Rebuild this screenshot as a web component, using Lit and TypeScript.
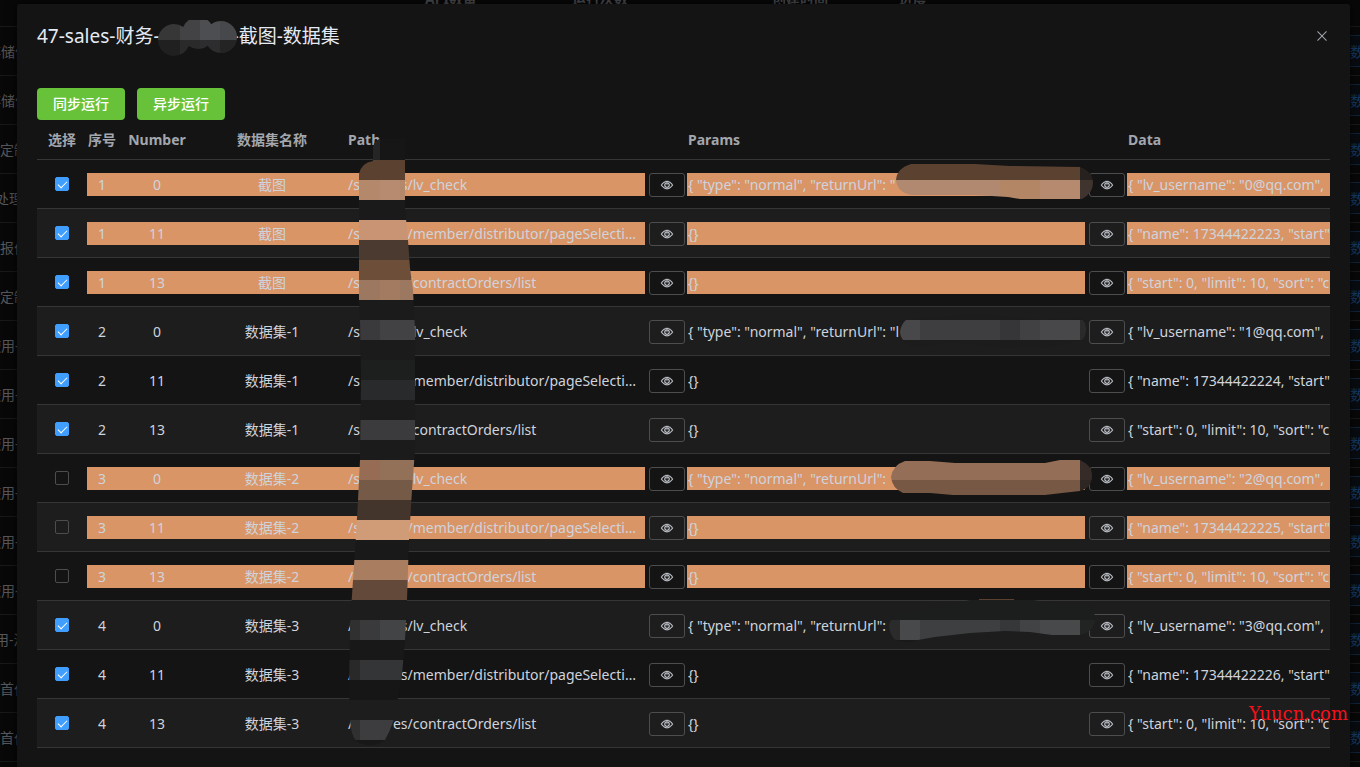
import { LitElement, html, svg, css } from "lit";
import { customElement, state } from "lit/decorators.js";
import { classMap } from "lit/directives/class-map.js";

interface Row {
  checked: boolean;
  marked: boolean;
  group: number;
  number: number;
  name: string;
  path: string;
  params: string;
  data: string;
}

const groups = [
  { id: 1, name: "截图", checked: true, marked: true, url: '"' },
  { id: 2, name: "数据集-1", checked: true, marked: false, url: '"l' },
  { id: 3, name: "数据集-2", checked: false, marked: true, url: "" },
  { id: 4, name: "数据集-3", checked: true, marked: false, url: "" },
];

const initialRows: Row[] = groups.flatMap((g, i) => {
  const base = { checked: g.checked, marked: g.marked, group: g.id, name: g.name };
  return [
    { ...base, number: 0, path: "es/lv_check", params: `{ "type": "normal", "returnUrl": ${g.url}`, data: `{ "lv_username": "${i}@qq.com",` },
    { ...base, number: 11, path: "es/member/distributor/pageSelectionList", params: "{}", data: `{ "name": ${17344422223 + i}, "start"` },
    { ...base, number: 13, path: "es/contractOrders/list", params: "{}", data: '{ "start": 0, "limit": 10, "sort": "c' },
  ];
});

const pageRows = [
  { text: "存储值", shift: "wide" },
  { text: "存储值", shift: "wide" },
  { text: "定制", shift: "" },
  { text: "处理", shift: "narrow" },
  { text: "报价", shift: "" },
  { text: "定制", shift: "" },
  { text: "使用-", shift: "wide" },
  { text: "使用-", shift: "wide" },
  { text: "使用-", shift: "wide" },
  { text: "使用-", shift: "wide" },
  { text: "使用-", shift: "wide" },
  { text: "使用-", shift: "wide" },
  { text: "用-满", shift: "narrow" },
  { text: "首付", shift: "" },
  { text: "首付", shift: "" },
];

/* Mosaic tiles: x, y, width, height, fill */
type Tile = [number, number, number, number, string];

const titleTiles: Tile[] = [
  [158, 20, 22, 20, "#373737"], [180, 20, 20, 20, "#434345"], [200, 20, 20, 20, "#4d4e52"], [220, 20, 18, 20, "#47484b"],
  [158, 40, 22, 18, "#202020"], [180, 40, 20, 18, "#2a2a2b"], [200, 40, 38, 18, "#2d2d2f"], [220, 40, 18, 18, "#242424"],
];

const pathTiles: Tile[] = [
  [345, 138, 80, 22, "#161616"], [373, 138, 7, 22, "#252525"],
  [345, 160, 80, 20, "#5b4130"], [345, 180, 80, 20, "#b3886b"], [380, 180, 20, 20, "#b78b6f"],
  [345, 200, 80, 20, "#1a1a1a"], [345, 220, 80, 20, "#c89473"], [345, 240, 80, 20, "#4b3a2f"],
  [345, 260, 80, 20, "#6d4e38"], [345, 280, 80, 20, "#9d7860"], [380, 280, 20, 20, "#a37b61"],
  [345, 300, 80, 20, "#1b1b1b"], [345, 320, 35, 20, "#3a3a3c"], [380, 320, 45, 20, "#424244"],
  [345, 340, 80, 20, "#1b1b1b"], [345, 360, 80, 20, "#1d1e1e"], [345, 380, 80, 20, "#292a2c"],
  [345, 400, 80, 20, "#1b1b1b"], [345, 420, 80, 20, "#3b3b3d"], [345, 440, 80, 20, "#1b1b1b"],
  [345, 460, 35, 20, "#966d54"], [380, 460, 45, 20, "#937158"], [345, 480, 80, 20, "#765a48"],
  [345, 500, 80, 20, "#43342c"], [345, 520, 80, 20, "#d09c78"], [345, 540, 80, 20, "#191919"],
  [345, 560, 80, 20, "#a97d60"], [345, 580, 80, 20, "#634939"], [345, 600, 80, 20, "#1d1d1d"],
  [345, 620, 15, 20, "#303031"], [360, 620, 20, 20, "#3a3a3c"], [380, 620, 45, 20, "#434446"],
  [345, 640, 80, 20, "#181818"], [345, 660, 15, 20, "#29292a"], [360, 660, 65, 20, "#343537"],
  [345, 680, 80, 20, "#161616"], [345, 700, 80, 20, "#1d1d1d"],
  [345, 720, 15, 20, "#303030"], [360, 720, 65, 20, "#3d3d3f"], [345, 740, 80, 10, "#181818"],
];

const paramTiles: Tile[] = [
  [890, 160, 190, 20, "#5b4130"], [890, 180, 110, 20, "#b18870"], [1000, 180, 40, 20, "#b38766"],
  [1040, 180, 40, 20, "#b58a6f"], [1080, 160, 16, 20, "#26211e"], [1080, 180, 16, 20, "#40342e"],
  [890, 314, 200, 6, "#1c1c1c"], [890, 340, 200, 9, "#1c1c1c"],
  [890, 320, 30, 20, "#48484a"], [920, 320, 80, 20, "#3e3e40"], [1000, 320, 20, 20, "#363638"],
  [1020, 320, 20, 20, "#414143"], [1040, 320, 40, 20, "#48484a"], [1080, 320, 10, 20, "#2a2a2a"],
  [888, 458, 192, 22, "#946e56"], [888, 480, 192, 20, "#775844"],
  [1080, 458, 16, 22, "#362b26"], [1080, 480, 16, 20, "#2d2623"],
  [886, 598, 212, 22, "#1c1d1d"], [886, 620, 14, 20, "#2b2b2b"], [900, 620, 20, 20, "#48494b"],
  [920, 620, 80, 20, "#3e3f40"], [1000, 620, 20, 20, "#363738"], [1020, 620, 20, 20, "#424344"],
  [1040, 620, 40, 20, "#48494a"], [1080, 620, 18, 20, "#222424"], [886, 640, 60, 6, "#191919"],
];

const drawTiles = (tiles: Tile[]) =>
  tiles.map(([x, y, w, h, fill]) => svg`<rect x=${x} y=${y} width=${w} height=${h} fill=${fill}></rect>`);

const eyeIcon = html`<svg class="eye" viewBox="0 0 1024 1024" aria-hidden="true">
  <path fill="currentColor" stroke="currentColor" stroke-width="24" d="M512 160c320 0 512 352 512 352S832 864 512 864 0 512 0 512s192-352 512-352zm0 64c-225.28 0-384.128 208.064-436.8 288 52.608 79.872 211.456 288 436.8 288 225.28 0 384.128-208.064 436.8-288-52.608-79.872-211.456-288-436.8-288zm0 64a224 224 0 1 1 0 448 224 224 0 0 1 0-448zm0 64a160.192 160.192 0 0 0-160 160c0 88.192 71.744 160 160 160s160-71.808 160-160-71.744-160-160-160z"></path>
  <path fill="currentColor" d="M480 340h64v190h-64z"></path>
</svg>`;

@customElement("app-root")
export class AppRoot extends LitElement {
  @state() private rows: Row[] = initialRows;

  static styles = css`
    :host {
      display: block;
      position: relative;
      min-height: 100vh;
      overflow: hidden;
      background: #080808;
      color: #cfd3dc;
      font-family: "Noto Sans", "Noto Sans CJK SC", sans-serif;
      font-size: 14px;
    }
    * { box-sizing: border-box; }
    .page {
      position: absolute;
      inset: 0;
      overflow: hidden;
      color: #56585c;
    }
    .page-head {
      display: grid;
      grid-template-columns: 425px 147px 200px 127px 1fr;
      height: 27px;
      border-bottom: 1px solid #191919;
      font-weight: 700;
      line-height: 20px;
    }
    .page-head span { margin-top: -11px; color: #4b4c50; }
    .page-row {
      display: flex;
      align-items: center;
      justify-content: space-between;
      height: 49px;
      border-bottom: 1px solid #191919;
      white-space: nowrap;
    }
    .wide { margin-left: -13px; }
    .narrow { margin-left: -5px; }
    .page-link {
      display: flex;
      align-items: center;
      width: 24px;
      height: 32px;
      padding: 0 0 0 14px;
      border: solid #10243a;
      border-width: 1px 0;
      background: #080c11;
      color: #143c66;
      font: inherit;
    }
    .dialog {
      position: relative;
      margin: 4px 10px 0 17px;
      min-height: calc(100vh - 4px);
      padding: 20px;
      border-radius: 2px;
      background: #141414;
      box-shadow: 0 0 12px rgba(0, 0, 0, 0.7);
    }
    .dialog-head {
      display: flex;
      align-items: center;
      justify-content: space-between;
      height: 24px;
    }
    .title {
      margin: 0;
      color: #e5eaf3;
      font-size: 19px;
      font-weight: 400;
      line-height: 24px;
      white-space: nowrap;
    }
    .title-gap { display: inline-block; width: 73px; }
    .close {
      display: flex;
      padding: 0;
      border: 0;
      background: none;
      color: #a3a6ad;
    }
    .close svg { width: 16px; height: 16px; }
    .actions {
      display: flex;
      gap: 12px;
      margin-top: 40px;
    }
    .run {
      height: 32px;
      padding: 0 16px 2px;
      border: 0;
      border-radius: 4px;
      background: #67c23a;
      color: #fff;
      font: inherit;
      font-weight: 500;
    }
    .table-wrap { overflow: hidden; }
    table {
      width: 1530px;
      border-collapse: separate;
      border-spacing: 0;
      table-layout: fixed;
    }
    .col-select { width: 50px; }
    .col-order { width: 30px; }
    .col-number { width: 80px; }
    .col-name { width: 150px; }
    .col-path { width: 340px; }
    .col-params { width: 440px; }
    th {
      height: 40px;
      padding: 0;
      border-bottom: 1px solid #363637;
      color: #a3a6ad;
      font-weight: 700;
      line-height: 23px;
      white-space: nowrap;
    }
    .left { padding-left: 1px; text-align: left; }
    td {
      padding: 13px 0 11px;
      border-bottom: 1px solid #363637;
      text-align: center;
      vertical-align: top;
    }
    .striped td { background: #1d1d1d; }
    .cell {
      height: 23px;
      margin-bottom: 1px;
      line-height: 23px;
      white-space: nowrap;
    }
    .marked .cell { background: #da9567; }
    .with-view {
      display: flex;
      gap: 4px;
      padding-right: 2px;
    }
    .long {
      flex: 1;
      min-width: 0;
      padding: 0 4px 0 1px;
      overflow: hidden;
      text-align: left;
      text-overflow: ellipsis;
    }
    .path-gap { display: inline-block; width: 33px; }
    .view {
      display: flex;
      align-items: center;
      justify-content: center;
      width: 36px;
      height: 24px;
      padding: 0;
      border: 1px solid #4c4d4f;
      border-radius: 3px;
      background: transparent;
      color: #cfd3dc;
    }
    .eye { width: 12px; height: 12px; overflow: visible; }
    .check {
      display: block;
      position: relative;
      appearance: none;
      width: 14px;
      height: 14px;
      margin: 4px auto 0;
      border: 1px solid #4c4d4f;
      border-radius: 2px;
      background: transparent;
    }
    .check:checked { border-color: #409eff; background: #409eff; }
    .check:checked::after {
      content: "";
      position: absolute;
      top: 1px;
      left: 4px;
      width: 4px;
      height: 8px;
      border: solid #fff;
      border-width: 0 1px 1px 0;
      transform: rotate(45deg);
    }
    .mosaic {
      position: absolute;
      top: 0;
      left: 0;
      width: 1360px;
      height: 767px;
      pointer-events: none;
    }
    .watermark {
      position: absolute;
      right: 12px;
      bottom: 42px;
      color: #f5101c;
      font-family: "DejaVu Serif", serif;
      font-size: 18px;
      line-height: 24px;
    }
  `;

  private toggle(index: number) {
    this.rows = this.rows.map((row, i) => (i === index ? { ...row, checked: !row.checked } : row));
  }

  private renderRow(row: Row, index: number) {
    return html`<tr class=${classMap({ striped: index % 2 === 1, marked: row.marked })}>
      <td><input class="check" type="checkbox" aria-label="选择 ${row.name} ${row.number}" .checked=${row.checked} @change=${() => this.toggle(index)} /></td>
      <td><div class="cell">${row.group}</div></td>
      <td><div class="cell">${row.number}</div></td>
      <td><div class="cell">${row.name}</div></td>
      <td>
        <div class="with-view">
          <div class="cell long">/s<span class="path-gap"></span>${row.path}</div>
          <button class="view" type="button" aria-label="Path">${eyeIcon}</button>
        </div>
      </td>
      <td>
        <div class="with-view">
          <div class="cell long">${row.params}</div>
          <button class="view" type="button" aria-label="Params">${eyeIcon}</button>
        </div>
      </td>
      <td><div class="cell long">${row.data}</div></td>
    </tr>`;
  }

  render() {
    return html`
      <div class="page">
        <div class="page-head"><i></i><span>API数量</span><span>运行次数</span><span>创建时间</span><span>进度</span></div>
        ${pageRows.map(
          (r) => html`<div class="page-row">
            <span class=${r.shift}>${r.text}</span>
            <button class="page-link" type="button">数据</button>
          </div>`
        )}
      </div>
      <section class="dialog" role="dialog" aria-labelledby="title">
        <header class="dialog-head">
          <h1 class="title" id="title">47-sales-财务-<span class="title-gap"></span>-截图-数据集</h1>
          <button class="close" type="button" aria-label="Close">
            <svg viewBox="0 0 1024 1024"><path fill="currentColor" d="M764.288 214.592 512 466.88 259.712 214.592a31.936 31.936 0 0 0-45.12 45.12L466.752 512 214.528 764.224a31.936 31.936 0 1 0 45.12 45.184L512 557.184l252.288 252.288a31.936 31.936 0 0 0 45.12-45.12L557.12 512.064l252.288-252.352a31.936 31.936 0 1 0-45.12-45.184z"></path></svg>
          </button>
        </header>
        <div class="actions">
          <button class="run" type="button">同步运行</button>
          <button class="run" type="button">异步运行</button>
        </div>
        <div class="table-wrap">
          <table>
            <colgroup>
              <col class="col-select" /><col class="col-order" /><col class="col-number" /><col class="col-name" />
              <col class="col-path" /><col class="col-params" /><col />
            </colgroup>
            <thead>
              <tr>
                <th>选择</th><th>序号</th><th>Number</th><th>数据集名称</th>
                <th class="left">Path</th><th class="left">Params</th><th class="left">Data</th>
              </tr>
            </thead>
            <tbody>${this.rows.map((row, i) => this.renderRow(row, i))}</tbody>
          </table>
        </div>
      </section>
      <svg class="mosaic" viewBox="0 0 1360 767" aria-hidden="true">
        <defs>
          <clipPath id="title-clip">
            <circle cx="174" cy="40" r="16"></circle><circle cx="198" cy="33" r="16"></circle><circle cx="221" cy="37" r="16"></circle>
          </clipPath>
          <clipPath id="path-clip">
            <path d="M373 160V147Q375 140 380 139H405V208L408 240L410 268L413 290L415 330V450L412 490L409 540L407 600L405 640L402 675L397 703L393 722Q390 731 385 740Q372 750 356 741Q351 735 350 720L349 690L350 625L353 580L356 535L358 500L360 460L361 380L360 320L359 300V174Q361 163 373 161Z"></path>
          </clipPath>
          <clipPath id="params-clip">
            <path d="M911 164H975L1010 166L1080 167Q1093 172 1093 183Q1093 193 1082 199H1020L1008 197L975 195H911Q897 192 896 180Q897 168 911 164Z"></path>
            <path d="M906 320Q960 314 1000 316L1040 320L1080 318Q1087 322 1086 331Q1085 339 1080 341L1040 348H1010L950 342L920 347Q901 345 900 332Q901 324 906 320Z"></path>
            <path d="M905 461H930L955 463H1045L1060 460H1080Q1093 466 1092 476Q1092 488 1080 491L1062 493L1045 495H953L930 493H903Q892 488 891 477Q893 465 905 461Z"></path>
            <path d="M901 613Q935 609 970 600H1033L1060 604L1083 603Q1096 609 1095 620Q1094 632 1080 635H1052L1030 632L1005 631L970 633L935 637L918 640Q905 645 894 639Q889 632 889 625Q892 615 901 613Z"></path>
          </clipPath>
        </defs>
        <g clip-path="url(#title-clip)">${drawTiles(titleTiles)}</g>
        <g clip-path="url(#path-clip)">${drawTiles(pathTiles)}</g>
        <g clip-path="url(#params-clip)">${drawTiles(paramTiles)}</g>
        <rect x="979" y="599" width="35" height="1" fill="#5b4130"></rect>
      </svg>
      <div class="watermark">Yuucn.com</div>
    `;
  }
}
